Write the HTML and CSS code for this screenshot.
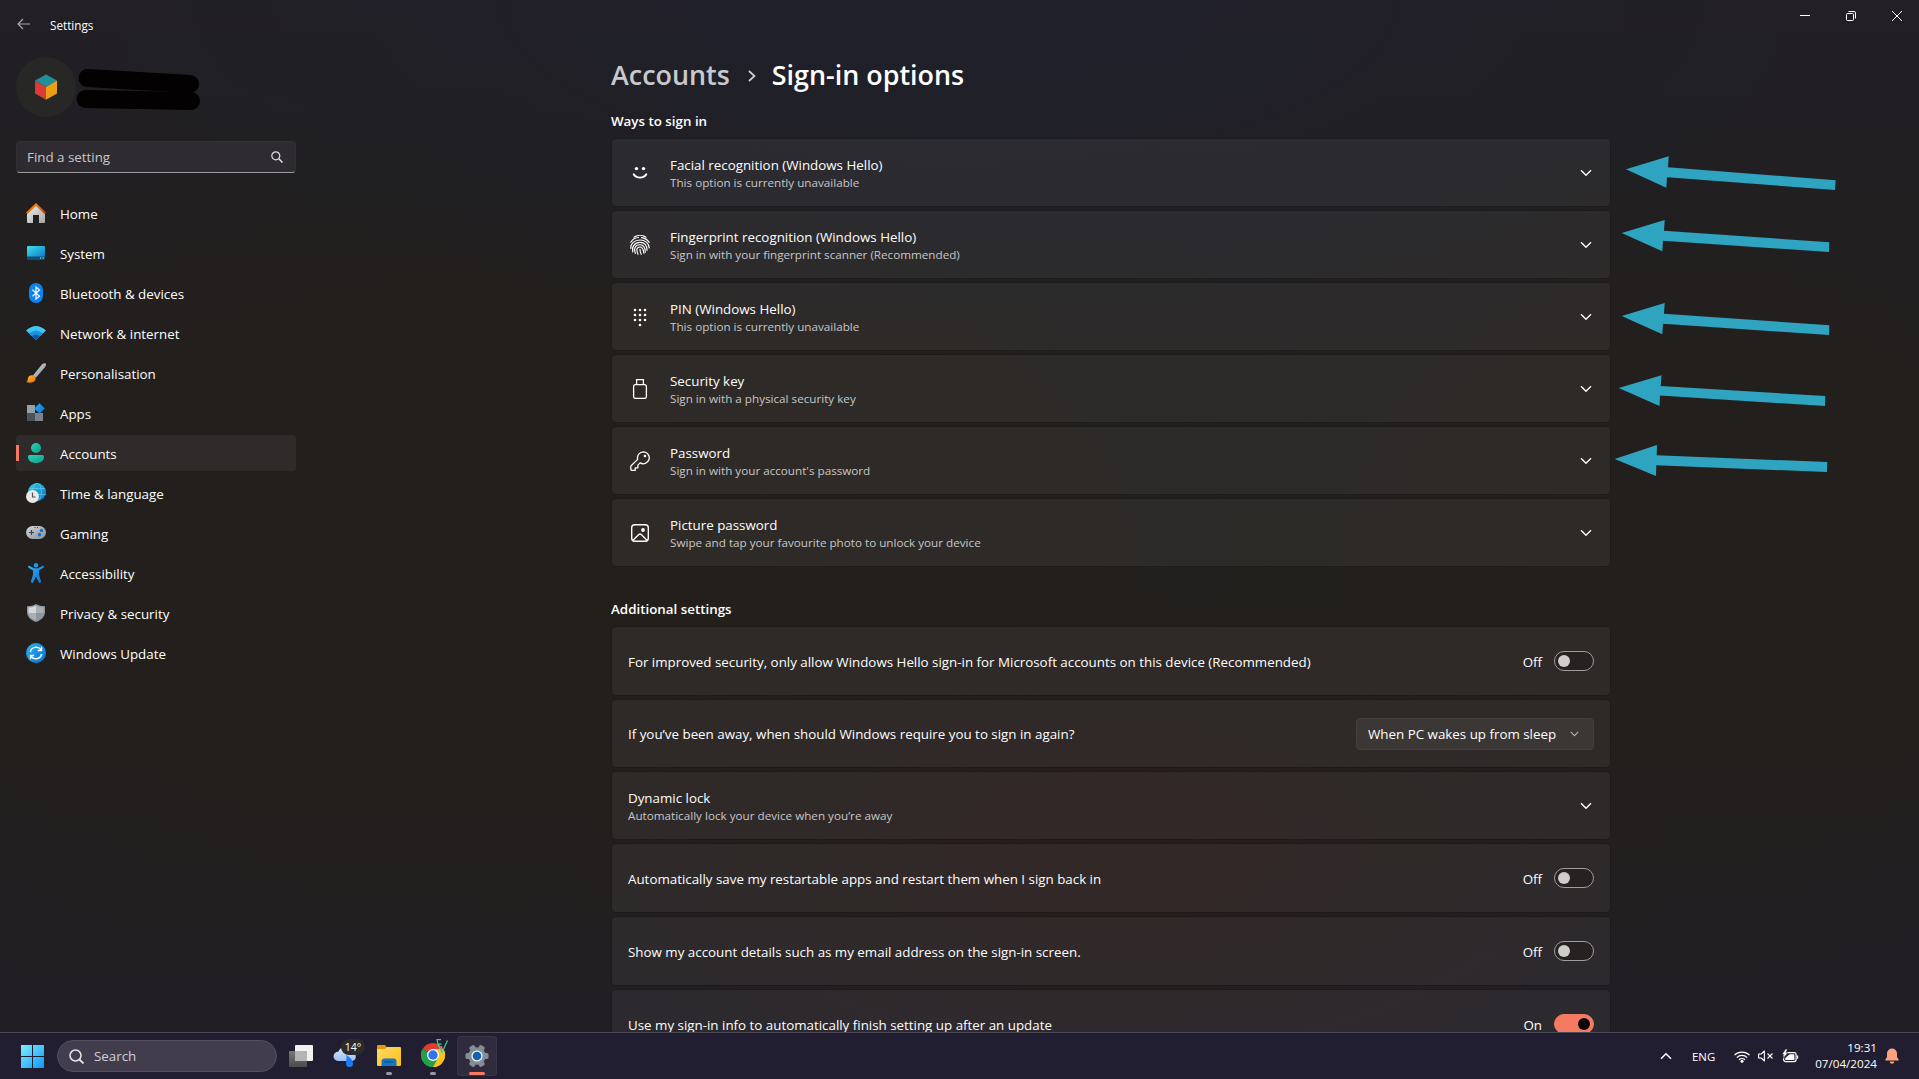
FILE: index.html
```html
<!DOCTYPE html>
<html lang="en-GB">
<head>
<meta charset="utf-8">
<title>Settings</title>
<link rel="stylesheet" href="styles.css">
</head>
<body>
<svg class="defs" width="0" height="0">
  <defs>
    <linearGradient id="gRoof" x1="0" y1="0" x2="1" y2="1"><stop offset="0" stop-color="#f59a10"/><stop offset="1" stop-color="#d83b01"/></linearGradient>
    <linearGradient id="gWall" x1="0" y1="0" x2="1" y2="1"><stop offset="0" stop-color="#f0f0f0"/><stop offset="1" stop-color="#a5a5a5"/></linearGradient>
    <linearGradient id="gScreen" x1="0" y1="0" x2="1" y2="1"><stop offset="0" stop-color="#3be3ea"/><stop offset="1" stop-color="#1277c9"/></linearGradient>
    <linearGradient id="gGrey" x1="0" y1="0" x2="1" y2="1"><stop offset="0" stop-color="#d4d8dd"/><stop offset="1" stop-color="#868d96"/></linearGradient>
    <linearGradient id="gFlame" x1="0" y1="0" x2="1" y2="1"><stop offset="0" stop-color="#ffc02e"/><stop offset="1" stop-color="#ef6a0b"/></linearGradient>
    <linearGradient id="gTeal" x1="0" y1="0" x2="1" y2="1"><stop offset="0" stop-color="#2ad1b4"/><stop offset="1" stop-color="#0f9d8c"/></linearGradient>
    <linearGradient id="gBlue" x1="0" y1="0" x2="1" y2="1"><stop offset="0" stop-color="#2fb1f5"/><stop offset="1" stop-color="#0a6fd0"/></linearGradient>
    <linearGradient id="gGlobe" x1="0" y1="0" x2="1" y2="1"><stop offset="0" stop-color="#33cfd6"/><stop offset="1" stop-color="#0b6fd4"/></linearGradient>
    <linearGradient id="gWin" gradientUnits="userSpaceOnUse" x1="0" y1="0" x2="23" y2="23"><stop offset="0" stop-color="#7cf0ff"/><stop offset="1" stop-color="#0f97f7"/></linearGradient>
    <linearGradient id="gFolder" x1="0" y1="0" x2="1" y2="1"><stop offset="0" stop-color="#ffdc6a"/><stop offset="1" stop-color="#fbbd14"/></linearGradient>
    <linearGradient id="gCloud" x1="0" y1="0" x2="0" y2="1"><stop offset="0" stop-color="#dbeafc"/><stop offset="1" stop-color="#9dbdf2"/></linearGradient>
    <linearGradient id="gDark" x1="0" y1="0" x2="0" y2="1"><stop offset="0" stop-color="#777"/><stop offset="1" stop-color="#4b4b4b"/></linearGradient>
    <symbol id="chev" viewBox="0 0 12 8"><path d="M1 1.3l5 5 5-5" fill="none" stroke="currentColor" stroke-width="1.4"/></symbol>
  </defs>
</svg>

<div class="window">
  <header class="titlebar">
    <svg class="back" width="14" height="12" viewBox="0 0 14 12"><path d="M13 6H1M6 1L1 6l5 5" fill="none" stroke="#a9a8ab" stroke-width="1.2"/></svg>
    <span class="app-name">Settings</span>
    <div class="controls">
      <svg width="10" height="10"><path d="M0 4.5h10" stroke="#fff"/></svg>
      <svg width="10" height="10" viewBox="0 0 10 10"><g fill="none" stroke="#fff"><rect x=".5" y="2.5" width="7" height="7" rx="1"/><path d="M2.5.5H8A1.5 1.5 0 0 1 9.500 2v5.500"/></g></svg>
      <svg width="10" height="10" viewBox="0 0 10 10"><path d="M0 0l10 10M10 0L0 10" stroke="#fff"/></svg>
    </div>
  </header>

  <div class="body">
    <aside class="sidebar">
      <div class="profile">
        <div class="avatar">
          <svg width="22" height="26" viewBox="0 0 22 26"><path d="M11 .5l11 6-11 6.500L0 6.500z" fill="#1f8f98"/><path d="M0 6.500L11 13v12.700L0 19.500z" fill="#db3b35"/><path d="M22 6.500L11 13v12.700l11-6.200z" fill="#eaa012"/></svg>
        </div>
        <svg class="redacted" width="126" height="44" viewBox="0 0 126 44"><g stroke="#030101" stroke-width="18" stroke-linecap="round"><path d="M11.500 11L114 17"/><path d="M9.500 32l105.500 2"/></g></svg>
      </div>
      <div class="find">
        <span>Find a setting</span>
        <svg width="12" height="12" viewBox="0 0 12 12"><g fill="none" stroke="#dedede" stroke-width="1.200"><circle cx="4.800" cy="4.800" r="4"/><path d="M7.800 7.800l3.700 3.700" stroke-width="1.500"/></g></svg>
      </div>
      <nav class="nav">
        <a class="nav-item"><svg viewBox="0 0 20 20"><path d="M1 9.500l9-7.500 9 7.500V19a1 1 0 0 1-1 1h-5v-8H7v8H2a1 1 0 0 1-1-1z" fill="url(#gWall)"/><path d="M.8 10.300L10 1.500l9.200 8.800" fill="none" stroke="url(#gRoof)" stroke-width="2.200"/></svg><span>Home</span></a>
        <a class="nav-item"><svg viewBox="0 0 20 20"><path d="M1 4a1 1 0 0 1 1-1h16a1 1 0 0 1 1 1v10H1z" fill="url(#gScreen)"/><path d="M1 13.500h18V16a1 1 0 0 1-1 1H2a1 1 0 0 1-1-1z" fill="#0c4f78"/><path d="M14 15h1.200M16.500 15h1.200" stroke="#cfe" /></svg><span>System</span></a>
        <a class="nav-item"><svg viewBox="0 0 20 20"><rect x="3" y="0" width="14" height="20" rx="7" fill="#0a84f5"/><path d="M6.500 6.700l7 6.500L10 16V4l3.500 2.900-7 6.400" fill="none" stroke="#fff" stroke-width="1.200"/></svg><span>Bluetooth &amp; devices</span></a>
        <a class="nav-item"><svg viewBox="0 0 20 20"><path d="M0 7.600Q10-1.600 20 7.600L10 17z" fill="#3ec6f5"/><path d="M3.200 10.500Q10 4.500 16.800 10.500L10 17z" fill="#1a93e4"/><path d="M6 13.200Q10 9.800 14 13.200L10 17z" fill="#0d57a8"/></svg><span>Network &amp; internet</span></a>
        <a class="nav-item"><svg viewBox="0 0 20 20"><path d="M19.700.6c-.8-.8-2.500-.3-3.600.7L7 12.500l2.600 2.500L18.700 4.500c1-1.300 1.800-3 1-3.900z" fill="url(#gGrey)"/><path d="M0 18.800c2 0 1.300-1.800 2.200-4.300 1-2.300 4.500-3 6.300-1 1.800 2 1 4.500-1.200 5.500-2.600 1.100-5.900.8-7.300-.2z" fill="url(#gFlame)"/></svg><span>Personalisation</span></a>
        <a class="nav-item"><svg viewBox="0 0 20 20"><path d="M1 2h8v8H1z" fill="#9aa0a8"/><path d="M1 10h8v8H1z" fill="#4d5258"/><path d="M9 10h8v8H9z" fill="#7b828b"/><path d="M13.500.2l5.300 5.300-5.300 5.300-5.300-5.300z" fill="url(#gBlue)"/></svg><span>Apps</span></a>
        <a class="nav-item active"><svg viewBox="0 0 20 20"><circle cx="10" cy="5" r="5" fill="url(#gTeal)"/><path d="M2 13.500A1.500 1.500 0 0 1 3.500 12h13a1.500 1.500 0 0 1 1.500 1.500C18 18 14.500 20 10 20s-8-2-8-6.500z" fill="url(#gTeal)"/></svg><span>Accounts</span></a>
        <a class="nav-item"><svg viewBox="0 0 20 20"><circle cx="11" cy="9" r="9" fill="url(#gGlobe)"/><g fill="none" stroke="#6fdcf5" stroke-width=".8" opacity=".7"><path d="M4 5.500h15M8 11.500h12"/><ellipse cx="11" cy="9" rx="4.500" ry="9"/></g><circle cx="6.500" cy="13.500" r="6.500" fill="#e9e9eb"/><path d="M6.500 9.500v4.500h3" fill="none" stroke="#555" stroke-width="1.200"/></svg><span>Time &amp; language</span></a>
        <a class="nav-item"><svg viewBox="0 0 20 20"><rect x="0" y="3" width="20" height="13" rx="6.500" fill="url(#gGrey)"/><path d="M3 9.500h5M5.500 7v5" stroke="#3c4148" stroke-width="1.200"/><circle cx="15.500" cy="7.500" r="1.700" fill="#1070d0"/><circle cx="13.500" cy="11.700" r="1.700" fill="#1070d0"/><path d="M8.500 4.500h1M11 4.500h1" stroke="#444"/></svg><span>Gaming</span></a>
        <a class="nav-item"><svg viewBox="0 0 20 20"><circle cx="10" cy="2.300" r="2.200" fill="#1b9cf0"/><path d="M2.700 2.900c-.7.400-.9 1.300-.2 1.800L7 7.400v4.300l-2 6.600c-.2 1.500 1.600 2.200 2.300.9L10 13.500l2.700 5.700c.7 1.300 2.500.6 2.300-.9l-2-6.600V7.400l4.500-2.700c.7-.5.5-1.400-.2-1.800-.3-.2-.7-.1-1.100 0L12 5.200H8L3.800 2.900c-.4-.1-.8-.2-1.100 0z" fill="url(#gBlue)"/></svg><span>Accessibility</span></a>
        <a class="nav-item"><svg viewBox="0 0 20 20"><path d="M10 1c2.500 1.600 5.500 2.200 9 2.300V9c0 4.500-3.500 8-9 10-5.500-2-9-5.500-9-10V3.300C4.500 3.200 7.500 2.600 10 1z" fill="#8f969d"/><path d="M10 2.500c2 1.200 4.500 1.900 7.600 2V10H10zM10 10v7.500C5.500 15.800 2.500 13 2.400 10z" fill="#a9afb5"/><path d="M10 2.500v7.500H2.400V4.500c3.100-.1 5.600-.8 7.600-2z" fill="#d5d9dd"/></svg><span>Privacy &amp; security</span></a>
        <a class="nav-item"><svg viewBox="0 0 20 20"><circle cx="10" cy="10" r="10" fill="url(#gBlue)"/><path d="M4.300 9A6 6 0 0 1 15 6.700M15.700 11A6 6 0 0 1 5 13.300" fill="none" stroke="#fff" stroke-width="1.500"/><path d="M15.500 3.800v3.700h-3.700M4.500 16.200v-3.700h3.700" fill="none" stroke="#fff" stroke-width="1.400"/></svg><span>Windows Update</span></a>
      </nav>
    </aside>

    <main class="content">
      <h1 class="crumbs"><span class="parent">Accounts</span><svg width="8" height="12" viewBox="0 0 8 12"><path d="M1 1l5.500 5L1 11" fill="none" stroke="#d0d0d0" stroke-width="1.700"/></svg><span>Sign-in options</span></h1>

      <h2 class="section">Ways to sign in</h2>
      <div class="cards ways">
        <div class="card">
          <svg class="ic" viewBox="0 0 20 20"><circle cx="6.500" cy="5.600" r="1.700"/><circle cx="13.500" cy="5.600" r="1.700"/><path d="M3.700 11.300c2.500 4.400 10.100 4.400 12.600 0" fill="none" stroke="#fff" stroke-width="1.900" stroke-linecap="round"/></svg>
          <div class="txt"><div class="t">Facial recognition (Windows Hello)</div><div class="s">This option is currently unavailable</div></div>
          <svg class="chev"><use href="#chev"/></svg>
        </div>
        <div class="card">
          <svg class="ic" viewBox="0 0 20 20"><g fill="none" stroke="#fff" stroke-width="1.150" stroke-linecap="round"><path d="M4 2.200C7.500-.1 12.500-.1 16 2.200"/><path d="M.8 7.200C3 3.800 6 2.600 8.500 2.500M11.500 2.600c3.500.4 6 2.200 7.700 4.800"/><path d="M.9 13.500C.3 8.500 4.500 5 10 5s9 3.500 9.200 8"/><path d="M2.800 17c-1.300-5.500 2-9.600 7.200-9.600 4.500 0 7.500 3.300 7 8"/><path d="M5.300 18.400c-1.800-5-.3-8.700 4.700-8.700 4 0 5.200 3.200 5.300 7.500"/><path d="M8 19.300c-1.800-4-1.700-7.300 2-7.300s3 4.500 4 6.300"/><path d="M10 14.300c0 2 .3 3.500 1.200 5"/></g></svg>
          <div class="txt"><div class="t">Fingerprint recognition (Windows Hello)</div><div class="s">Sign in with your fingerprint scanner (Recommended)</div></div>
          <svg class="chev"><use href="#chev"/></svg>
        </div>
        <div class="card">
          <svg class="ic" viewBox="0 0 20 20"><circle cx="5" cy="3" r="1.300"/><circle cx="10" cy="3" r="1.300"/><circle cx="15" cy="3" r="1.300"/><circle cx="5" cy="8" r="1.300"/><circle cx="10" cy="8" r="1.300"/><circle cx="15" cy="8" r="1.300"/><circle cx="5" cy="13" r="1.300"/><circle cx="10" cy="13" r="1.300"/><circle cx="15" cy="13" r="1.300"/><circle cx="10" cy="18" r="1.300"/></svg>
          <div class="txt"><div class="t">PIN (Windows Hello)</div><div class="s">This option is currently unavailable</div></div>
          <svg class="chev"><use href="#chev"/></svg>
        </div>
        <div class="card">
          <svg class="ic" viewBox="0 0 20 20"><g fill="none" stroke="#fff" stroke-width="1.300"><path d="M6.600 5.600V.7h6.800v4.900"/><rect x="3.600" y="5.600" width="12.800" height="13.800" rx="2"/></g></svg>
          <div class="txt"><div class="t">Security key</div><div class="s">Sign in with a physical security key</div></div>
          <svg class="chev"><use href="#chev"/></svg>
        </div>
        <div class="card">
          <svg class="ic" viewBox="0 0 20 20"><path d="M13.500.8a6 6 0 0 0-5.800 7.600L.8 15v3.200a1.200 1.200 0 0 0 1.200 1.200h3.200v-2.600h2.700v-2.700l2.200-2.200a6 6 0 1 0 3.400-11.100z" fill="none" stroke="#fff" stroke-width="1.300" stroke-linejoin="round"/><circle cx="15" cy="5" r="1.300"/></svg>
          <div class="txt"><div class="t">Password</div><div class="s">Sign in with your account's password</div></div>
          <svg class="chev"><use href="#chev"/></svg>
        </div>
        <div class="card">
          <svg class="ic" viewBox="0 0 20 20"><g fill="none" stroke="#fff" stroke-width="1.400"><rect x="1.700" y="1.700" width="16.600" height="16.600" rx="3"/><path d="M3 17.300l5.800-5.700a1.700 1.700 0 0 1 2.400 0l5.800 5.700"/></g><circle cx="13" cy="7" r="1.900"/></svg>
          <div class="txt"><div class="t">Picture password</div><div class="s">Swipe and tap your favourite photo to unlock your device</div></div>
          <svg class="chev"><use href="#chev"/></svg>
        </div>
      </div>

      <h2 class="section second">Additional settings</h2>
      <div class="cards">
        <div class="card tall"><div class="txt t">For improved security, only allow Windows Hello sign-in for Microsoft accounts on this device (Recommended)</div><span class="state">Off</span><i class="toggle"></i></div>
        <div class="card"><div class="txt t">If you’ve been away, when should Windows require you to sign in again?</div><div class="select"><span>When PC wakes up from sleep</span><svg width="9" height="6"><use href="#chev"/></svg></div></div>
        <div class="card"><div class="txt"><div class="t">Dynamic lock</div><div class="s">Automatically lock your device when you’re away</div></div><svg class="chev"><use href="#chev"/></svg></div>
        <div class="card tall"><div class="txt t">Automatically save my restartable apps and restart them when I sign back in</div><span class="state">Off</span><i class="toggle"></i></div>
        <div class="card tall"><div class="txt t">Show my account details such as my email address on the sign-in screen.</div><span class="state">Off</span><i class="toggle"></i></div>
        <div class="card tall"><div class="txt t">Use my sign-in info to automatically finish setting up after an update</div><span class="state">On</span><i class="toggle on"></i></div>
      </div>
    </main>
  </div>
</div>

<svg class="arrows" width="1919" height="1032" fill="#2fa4c0">
  <path d="M1626 169.200L1668.700 156.300 1668 167.300 1835.700 180.300 1835 190 1667 177.200 1666.300 187.700z"/>
  <path d="M1621.700 232.900L1664.700 220 1664 230.700 1829.300 242.300 1829 252 1663 240.700 1662.300 251.300z"/>
  <path d="M1621.700 315.900L1664.700 303 1664 313.700 1829.300 325.300 1829 335 1663 323.700 1662.300 334.300z"/>
  <path d="M1618.700 387.900L1661.500 375.300 1660.700 386 1825.300 396 1825 406 1660 395.500 1659.500 406z"/>
  <path d="M1614.700 459L1657 445 1656.700 455.300 1827.300 462 1827 472 1656.300 465.300 1656 476z"/>
</svg>

<footer class="taskbar">
  <div class="tile start"><svg width="23" height="23" viewBox="0 0 23 23"><path d="M0 0h11v11H0zM12 0h11v11H12zM0 12h11v11H0zM12 12h11v11H12z" fill="url(#gWin)"/></svg></div>
  <div class="tb-search"><svg width="15" height="15" viewBox="0 0 15 15"><g fill="none" stroke="#e6e4ea" stroke-width="1.500"><circle cx="6.500" cy="6.500" r="5.500"/><path d="M10.500 10.500l4 4" stroke-width="1.800"/></g></svg><span>Search</span></div>
  <div class="tile"><svg width="24" height="22" viewBox="0 0 24 22"><rect x="0" y="6" width="18" height="16" rx="1" fill="url(#gDark)"/><rect x="6" y="0" width="18" height="16" rx="1" fill="#f1f1f1"/><path d="M6 6h12v10H6z" fill="#b4b4b4"/></svg></div>
  <div class="tile weather">
    <svg width="24" height="24" viewBox="0 0 24 24"><path d="M5 17a4.600 4.600 0 0 1 .3-9.200A7 7 0 0 1 18.500 8 4.600 4.600 0 0 1 19.500 17z" fill="url(#gCloud)"/><path d="M13.300 11c3.500 2 6.700 5 6.700 8.500a3.500 3.500 0 0 1-7 0c0-3 1-5 .3-8.500z" fill="#1d7cf2"/></svg>
    <span class="temp">14°</span>
  </div>
  <div class="tile running"><svg width="24" height="24" viewBox="0 0 24 24"><path d="M0 2a1 1 0 0 1 1-1h7l2 2.500L8 6H0z" fill="#e19a0d"/><path d="M0 5h8l2-2h13a1 1 0 0 1 1 1v17a1 1 0 0 1-1 1H1a1 1 0 0 1-1-1z" fill="url(#gFolder)"/><path d="M4.500 22v-4.500a3 3 0 0 1 3-3h9a3 3 0 0 1 3 3V22z" fill="#1177c8"/><path d="M7.500 18h9" stroke="#0b4f8c" stroke-width="1.300"/></svg></div>
  <div class="tile running"><svg class="chrome" width="28" height="30" viewBox="0 0 28 30">
    <path d="M12 17L1.600 11A12 12 0 0 1 22.400 11z" fill="#e33b2e"/>
    <path d="M12 17L22.400 11A12 12 0 0 1 12 29z" fill="#fcc31e"/>
    <path d="M12 17v12A12 12 0 0 1 1.600 11z" fill="#22a04a"/>
    <path d="M12 11h10.400A12 12 0 0 1 12 29l5.200-9z" fill="#fcc31e"/><path d="M6.800 20L1.600 11A12 12 0 0 0 12 29l5.200-9z" fill="#22a04a"/>
    <circle cx="12" cy="17" r="6" fill="#fff"/><circle cx="12" cy="17" r="4.700" fill="#2f74ee"/>
    <path d="M20 1.700h-4l1 4.500h3.500M17 6.500l4 8L26.500 2.500M20.500 14V8" fill="none" stroke="#40cf9c" stroke-width="1.200"/></svg></div>
  <div class="tile running current"><svg width="24" height="24" viewBox="0 0 24 24"><g fill="#848c95"><circle cx="12" cy="12" r="8.800"/><rect x="9" y="0.500" width="6" height="23" rx="1.500" transform="rotate(30 12 12)"/><rect x="9" y="0.500" width="6" height="23" rx="1.500" transform="rotate(90 12 12)"/><rect x="9" y="0.500" width="6" height="23" rx="1.500" transform="rotate(150 12 12)"/></g><circle cx="12" cy="12" r="5.600" fill="#f1f4f6"/><circle cx="12" cy="12" r="4.300" fill="#1062ad"/></svg></div>

  <div class="tray">
    <svg class="up" width="12" height="8"><path d="M1 6.800l5-5 5 5" fill="none" stroke="#fff" stroke-width="1.500"/></svg>
    <span class="lang">ENG</span>
    <svg class="wifi" width="16" height="13" viewBox="0 0 16 13"><g fill="none" stroke="#fff" stroke-width="1.200"><path d="M.5 5.200a10.500 10.500 0 0 1 15 0M2.800 7.600a7.300 7.300 0 0 1 10.400 0M5 9.800a4.300 4.300 0 0 1 6 0"/></g><circle cx="8" cy="11.300" r="1.500" fill="#fff"/></svg>
    <svg class="mute" width="16" height="12" viewBox="0 0 16 12"><g fill="none" stroke="#fff" stroke-width="1.100"><path d="M.6 4v4h2.600l3.200 3V1L3.200 4z" stroke-linejoin="round"/><path d="M9.500 3.500l5 5M14.500 3.500l-5 5"/></g></svg>
    <svg class="battery" width="17" height="14" viewBox="0 0 17 14"><rect x="1.600" y="3.600" width="12.500" height="9" rx="2" fill="none" stroke="#fff" stroke-width="1.200"/><path d="M3.300 10.900V9L7.500 5.300h4.900v5.600z" fill="#fff"/><path d="M15 6.500h1.200v3.200H15z" fill="#fff"/><path d="M3.500 0L0 5.500h2L1 9.500 6 4H4L5.500 0z" fill="#fff" stroke="#211e32" stroke-width=".6"/></svg>
    <div class="clock"><div>19:31</div><div>07/04/2024</div></div>
    <svg class="bell" width="14" height="16" viewBox="0 0 14 16"><path d="M7 .5a5 5 0 0 1 5 5V9l1.600 2.600a.6.600 0 0 1-.5.900H.9a.6.600 0 0 1-.5-.9L2 9V5.500a5 5 0 0 1 5-5zM4.800 13.500h4.400a2.200 2.200 0 0 1-4.400 0z" fill="#f9a27d"/></svg>
  </div>
</footer>
</body>
</html>
```
FILE: styles.css
```css
* { box-sizing: border-box; }
html, body { margin: 0; height: 100%; overflow: hidden; }
body {
  font-family: "Open Sans", "Noto Sans", sans-serif;
  font-size: 13.350px;
  color: #fff;
  background: #221f1e;
  display: flex;
  flex-direction: column;
}
.defs { position: absolute; }
svg { flex: none; display: block; }

.window {
  flex: none;
  height: 1032px;
  overflow: hidden;
  background:
    radial-gradient(ellipse 900px 330px at 950px 0, #1f202b 0, rgba(31, 32, 43, 0) 100%),
    radial-gradient(ellipse 560px 260px at 1120px 850px, #281d1b 0, rgba(40, 29, 27, 0) 100%),
    radial-gradient(ellipse 900px 500px at 500px 560px, #241f1b 0, rgba(36, 31, 27, 0) 100%),
    radial-gradient(ellipse 500px 420px at 1700px 560px, #241f1c 0, rgba(36, 31, 28, 0) 100%),
    linear-gradient(#221f25 0, #211f20 30%, #221f1e 65%, #211f25 100%);
}

.titlebar { height: 48px; display: flex; align-items: center; padding-left: 17px; }
.app-name { font-size: 11.700px; margin: 1px 0 0 19px; }
.controls { margin-left: auto; align-self: flex-start; display: flex; gap: 36px; padding: 11px 17px 0 0; }

.body { display: flex; }
.sidebar { width: 280px; margin-left: 16px; flex: none; padding-top: 9px; }
.profile { display: flex; align-items: center; height: 60px; }
.avatar { width: 60px; height: 60px; border-radius: 50%; background: #272726; display: grid; place-items: center; }
.redacted { margin: 3px 0 0 0; }

.find {
  margin-top: 24px;
  height: 32px;
  display: flex;
  align-items: center;
  justify-content: space-between;
  padding: 0 12px 0 10px;
  border: 1px solid #323036;
  border-bottom-color: #9b9a9d;
  border-radius: 4px;
  background: #2e2c31;
  color: #c8c7c9;
}

.nav { margin-top: 22px; display: flex; flex-direction: column; gap: 4px; }
.nav-item { height: 36px; display: flex; align-items: center; gap: 14px; padding-left: 10px; border-radius: 4px; }
.nav-item svg { width: 20px; height: 20px; }
.nav-item span { margin-top: 2px; }
.nav-item.active { background: linear-gradient(90deg, #f47b62, #f47b62) 0 50% / 3px 16px no-repeat, #2f2b2a; }

.content { margin-left: 315px; width: 999px; padding-top: 7px; }
.crumbs { margin: 0; height: 40px; display: flex; align-items: center; font-size: 26.900px; font-weight: 600; line-height: 40px; }
.crumbs svg { margin: 2px 16px 0 18px; }
.parent { color: #c9c9cc; }
.section { margin: 16px 0 8px; font-size: 13.350px; line-height: 20px; font-weight: 600; }
.section.second { margin: 33px 0 8px; }
.cards { display: flex; flex-direction: column; gap: 5px; margin-left: 1px; }
.card {
  height: 67px;
  display: flex;
  align-items: center;
  padding: 0 16px;
  border-radius: 4px;
  background: rgba(255, 255, 255, .052);
  box-shadow: 0 0 0 1px rgba(0, 0, 0, .12);
}
.card.tall { height: 68px; }
.card.tall .t, .state { padding-top: 1px; }
.ic { width: 20px; height: 20px; margin: 0 20px 0 2px; fill: #fff; }
.txt { flex: 1; }
.t { line-height: 20px; white-space: nowrap; }
.s { font-size: 11.680px; line-height: 15px; color: #c8c7c8; white-space: nowrap; }
.chev { width: 12px; height: 8px; margin-right: 2px; }
.state { margin-right: 12px; }
.toggle { width: 40px; height: 20px; border: 1px solid #a09e9d; border-radius: 10px; padding: 3px; background: #262221; }
.toggle::before { content: ""; display: block; width: 12px; height: 12px; border-radius: 50%; background: #cfcdcc; }
.toggle.on { background: #f47b62; border-color: #f47b62; }
.toggle.on::before { margin-left: 20px; background: #0b0504; }
.select {
  width: 238px;
  height: 32px;
  display: flex;
  align-items: center;
  justify-content: space-between;
  padding: 0 14px 0 11px;
  border: 1px solid #423f3d;
  border-radius: 4px;
  background: #3b3735;
}
.select svg { color: #b5b3b2; }

/* Pointers laid over the window */
.arrows { position: absolute; left: 0; top: 0; pointer-events: none; }

.taskbar {
  flex: 1;
  display: flex;
  align-items: center;
  gap: 4px;
  padding-left: 13px;
  border-top: 1px solid #4a4854;
  background: #211e32;
}
.tile { position: relative; width: 40px; height: 40px; border-radius: 4px; display: grid; place-items: center; }
.start { padding-right: 2px; }
.tb-search {
  width: 220px;
  height: 32px;
  border-radius: 16px;
  border: 1px solid #514d5c;
  background: #413d4c;
  display: flex;
  align-items: center;
  gap: 10px;
  padding-left: 11px;
  color: #d2d0d7;
}
.temp {
  position: absolute;
  left: 16px;
  top: 3px;
  width: 24px;
  height: 16px;
  border-radius: 8px;
  background: #2b2b2b;
  font-size: 10.500px;
  line-height: 16px;
  text-align: center;
}
.chrome { position: relative; left: 2px; top: -3px; }
.running::after {
  content: "";
  position: absolute;
  left: 17px;
  bottom: 1px;
  width: 6px;
  height: 3px;
  border-radius: 2px;
  background: #9b98a3;
}
.current { background: #302c3e; box-shadow: inset 0 0 0 1px #393546; }
.current::after { left: 12px; width: 16px; background: #f47b62; }

.tray { margin-left: auto; display: flex; align-items: center; padding-right: 20px; }
.lang { font-size: 11.400px; margin-left: 20px; width: 42px; }
.mute { margin-left: 8px; }
.battery { margin-left: 8px; }
.clock { width: 78px; font-size: 11.650px; line-height: 16px; text-align: right; }
.bell { margin-left: 8px; }
```
